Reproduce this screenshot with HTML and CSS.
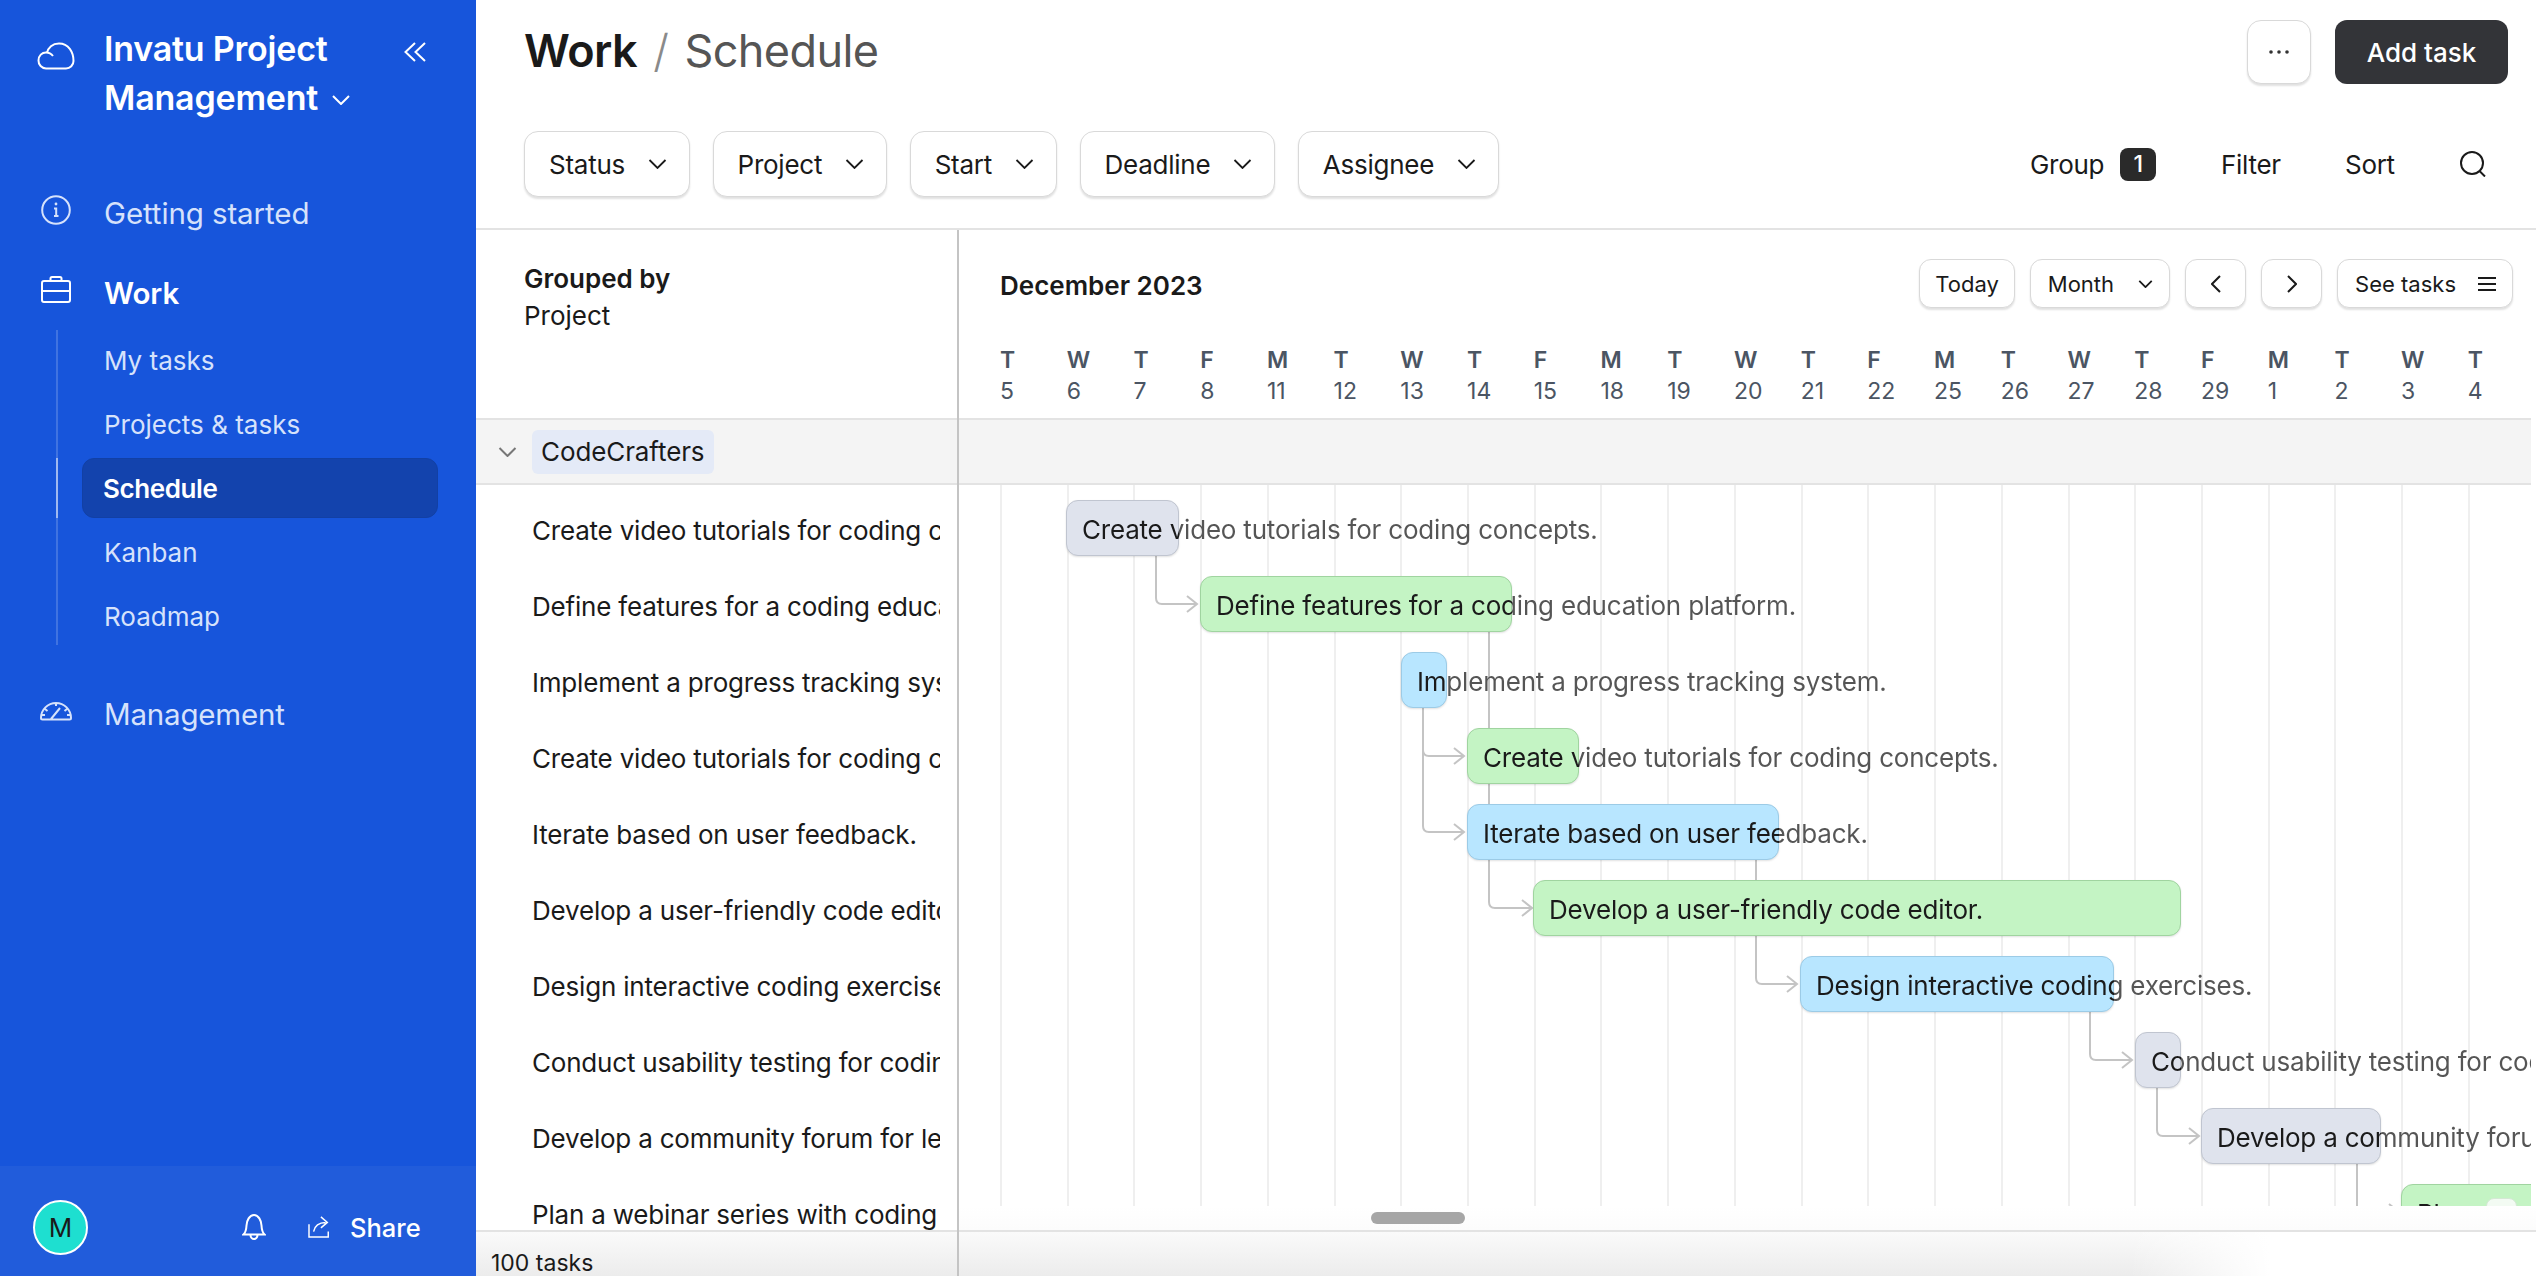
FILE: index.html
```html
<!DOCTYPE html>
<html lang="en">
<head>
<meta charset="utf-8">
<title>Work / Schedule</title>
<link rel="stylesheet" href="styles.css">
</head>
<body>
<div class="app">
  <aside class="sidebar">
    <div class="brand">
      <svg class="brand-cloud" viewBox="0 0 38 28"><path d="M9 26.500h20a7.500 7.500 0 0 0 7.500-7.500c0-9-5-17.500-14.500-17.500-6.500 0-11 4-12 9.500M9 26.500a7.800 7.800 0 0 1-7.500-8c0-5 3.500-8 7.500-8 3 0 5.500 1.500 7 3.500"/></svg>
      <div class="brand-name">Invatu Project<br>Management<svg class="brand-caret" viewBox="0 0 18 10"><path d="M1 1l8 8 8-8"/></svg></div>
      <svg class="brand-collapse" viewBox="0 0 22 20"><path d="M11 1L1.500 10 11 19M21 1L11.500 10 21 19"/></svg>
    </div>
    <nav class="nav">
      <a class="nav-item"><svg class="nav-icon" viewBox="0 0 30 30"><circle cx="15" cy="15" r="13.800"/><path d="M13 13.500h2.200V21M13 21h4.500"/><circle class="dot" cx="15" cy="9" r="1.400"/></svg>Getting started</a>
      <a class="nav-item is-open"><svg class="nav-icon" viewBox="0 0 30 30"><rect x="1" y="5" width="28" height="21" rx="2"/><path d="M1 15h28M9.500 5V2.500q0-1.500 1.500-1.500h8q1.500 0 1.500 1.500V5"/></svg>Work</a>
      <ul class="subnav">
        <li class="sub-item">My tasks</li>
        <li class="sub-item">Projects &amp; tasks</li>
        <li class="sub-item is-active">Schedule</li>
        <li class="sub-item">Kanban</li>
        <li class="sub-item">Roadmap</li>
      </ul>
      <a class="nav-item nav-mgmt"><svg class="nav-icon" viewBox="0 0 32 22"><path d="M2.500 20.500h27q1.500 0 1.500-1.500a15 15 0 0 0-30 0q0 1.500 1.500 1.500zM11 20l9-11M16 4v3M5 10l2.500 2M27 10l-2.500 2M2 16h3M27 16h3"/></svg>Management</a>
    </nav>
    <div class="side-foot">
      <span class="avatar">M</span>
      <svg class="bell" viewBox="0 0 24 28"><path d="M1.500 21.500h21c-2.500-2.500-2.800-5-3-9-.2-5-3-10.500-7.500-10.500S4.700 7.500 4.500 12.500c-.2 4-.5 6.500-3 9zM8.500 22a3.500 4 0 0 0 7 0"/></svg>
      <span class="share"><svg class="share-icon" viewBox="0 0 26 24"><path d="M1 9v14h21V17M6 17c1-6 6-10 13-10M14 1l7 6-7 6"/></svg>Share</span>
    </div>
  </aside>

  <main class="main">
    <header class="topbar">
      <h1 class="crumbs"><b>Work</b><i>/</i><span>Schedule</span></h1>
      <div class="top-actions">
        <button class="btn btn-more"><svg viewBox="0 0 20 4" class="dots"><circle cx="2" cy="2" r="1.800"/><circle cx="10" cy="2" r="1.800"/><circle cx="18" cy="2" r="1.800"/></svg></button>
        <button class="btn-primary">Add task</button>
      </div>
    </header>
    <div class="filters">
      <div class="filter-list">
        <button class="btn btn-filter">Status<svg class="caret" viewBox="0 0 18 10"><path d="M1 1l8 8 8-8"/></svg></button>
        <button class="btn btn-filter">Project<svg class="caret" viewBox="0 0 18 10"><path d="M1 1l8 8 8-8"/></svg></button>
        <button class="btn btn-filter">Start<svg class="caret" viewBox="0 0 18 10"><path d="M1 1l8 8 8-8"/></svg></button>
        <button class="btn btn-filter">Deadline<svg class="caret" viewBox="0 0 18 10"><path d="M1 1l8 8 8-8"/></svg></button>
        <button class="btn btn-filter">Assignee<svg class="caret" viewBox="0 0 18 10"><path d="M1 1l8 8 8-8"/></svg></button>
      </div>
      <div class="view-tools">
        <span class="tool tool-group">Group<em class="badge">1</em></span>
        <span class="tool tool-filter">Filter</span>
        <span class="tool tool-sort">Sort</span>
        <svg class="search" viewBox="0 0 28 26"><circle cx="13" cy="12" r="11"/><path d="M20.500 20l5.500 5.500"/></svg>
      </div>
    </div>

    <section class="board">
      <div class="pane-left">
        <div class="grouped"><strong>Grouped by</strong><span>Project</span></div>
        <div class="group-row">
          <svg class="group-caret" viewBox="0 0 18 10"><path d="M1 1l8 8 8-8"/></svg>
          <span class="chip">CodeCrafters</span>
        </div>
        <ul class="task-list">
          <li>Create video tutorials for coding concepts.</li>
          <li>Define features for a coding education platform.</li>
          <li>Implement a progress tracking system.</li>
          <li>Create video tutorials for coding concepts.</li>
          <li>Iterate based on user feedback.</li>
          <li>Develop a user-friendly code editor.</li>
          <li>Design interactive coding exercises.</li>
          <li>Conduct usability testing for coding platform.</li>
          <li>Develop a community forum for learners.</li>
          <li>Plan a webinar series with coding experts.</li>
        </ul>
        <div class="foot foot-left">100 tasks</div>
      </div>

      <div class="pane-right">
        <div class="cal-head">
          <div class="cal-top">
            <h2 class="month">December 2023</h2>
            <div class="cal-actions">
              <button class="btn btn-sm btn-today">Today</button>
              <button class="btn btn-sm btn-month">Month<svg class="caret-sm" viewBox="0 0 16 9"><path d="M1 1l7 7 7-7"/></svg></button>
              <button class="btn btn-sm btn-arrow"><svg class="arrow" viewBox="0 0 10 18"><path d="M9 1L1 9l8 8"/></svg></button>
              <button class="btn btn-sm btn-arrow"><svg class="arrow" viewBox="0 0 10 18"><path d="M1 1l8 8-8 8"/></svg></button>
              <button class="btn btn-sm btn-see">See tasks<svg class="lines" viewBox="0 0 18 14"><path d="M0 1h18M0 7h18M0 13h18"/></svg></button>
            </div>
          </div>
          <div class="days">
            <div class="day"><b>T</b><span>5</span></div>
            <div class="day"><b>W</b><span>6</span></div>
            <div class="day"><b>T</b><span>7</span></div>
            <div class="day"><b>F</b><span>8</span></div>
            <div class="day"><b>M</b><span>11</span></div>
            <div class="day"><b>T</b><span>12</span></div>
            <div class="day"><b>W</b><span>13</span></div>
            <div class="day"><b>T</b><span>14</span></div>
            <div class="day"><b>F</b><span>15</span></div>
            <div class="day"><b>M</b><span>18</span></div>
            <div class="day"><b>T</b><span>19</span></div>
            <div class="day"><b>W</b><span>20</span></div>
            <div class="day"><b>T</b><span>21</span></div>
            <div class="day"><b>F</b><span>22</span></div>
            <div class="day"><b>M</b><span>25</span></div>
            <div class="day"><b>T</b><span>26</span></div>
            <div class="day"><b>W</b><span>27</span></div>
            <div class="day"><b>T</b><span>28</span></div>
            <div class="day"><b>F</b><span>29</span></div>
            <div class="day"><b>M</b><span>1</span></div>
            <div class="day"><b>T</b><span>2</span></div>
            <div class="day"><b>W</b><span>3</span></div>
            <div class="day"><b>T</b><span>4</span></div>
          </div>
        </div>
        <div class="group-band"></div>
        <div class="chart">
          <div class="grid-lines">
            <i></i><i></i><i></i><i></i><i></i><i></i><i></i><i></i><i></i><i></i><i></i><i></i><i></i><i></i><i></i><i></i><i></i><i></i><i></i><i></i><i></i><i></i><i></i>
          </div>
          <svg class="links" viewBox="0 0 1572 721">
            <path d="M197 71V113q0 6 6 6H237M228 111l10 8-10 8"/>
            <path d="M530 147V417q0 6 6 6H572M563 415l10 8-10 8"/>
            <path d="M464 223V341q0 6 6 6H504M495 339l10 8-10 8M464 265q0 6 6 6H504M495 263l10 8-10 8"/>
            <path d="M797 375V493q0 6 6 6H837M828 491l10 8-10 8"/>
            <path d="M1131 527V569q0 6 6 6H1172M1163 567l10 8-10 8"/>
            <path d="M1198 603V645q0 6 6 6H1239M1230 643l10 8-10 8"/>
            <path d="M1398 679V721q0 6 6 6H1439M1430 719l10 8-10 8"/>
          </svg>
          <div class="bars">
            <div class="bar-row"><div class="bar bar-grey" style="--x:107px;--w:113px"><span class="label">Create video tutorials for coding concepts.</span></div></div>
            <div class="bar-row"><div class="bar bar-green" style="--x:241px;--w:312px"><span class="label">Define features for a coding education platform.</span></div></div>
            <div class="bar-row"><div class="bar bar-blue" style="--x:442px;--w:46px"><span class="label">Implement a progress tracking system.</span></div></div>
            <div class="bar-row"><div class="bar bar-green" style="--x:508px;--w:112px"><span class="label">Create video tutorials for coding concepts.</span></div></div>
            <div class="bar-row"><div class="bar bar-blue" style="--x:508px;--w:312px"><span class="label">Iterate based on user feedback.</span></div></div>
            <div class="bar-row"><div class="bar bar-green" style="--x:574px;--w:648px"><span class="label">Develop a user-friendly code editor.</span></div></div>
            <div class="bar-row"><div class="bar bar-blue" style="--x:841px;--w:314px"><span class="label">Design interactive coding exercises.</span></div></div>
            <div class="bar-row"><div class="bar bar-grey" style="--x:1176px;--w:46px"><span class="label">Conduct usability testing for coding platform.</span></div></div>
            <div class="bar-row"><div class="bar bar-grey" style="--x:1242px;--w:180px"><span class="label">Develop a community forum for learners.</span></div></div>
            <div class="bar-row"><div class="bar bar-green" style="--x:1442px;--w:220px"><span class="label">Plan a webinar series with coding experts.</span><span class="bar-tag">+</span></div></div>
          </div>
        </div>
        <div class="scroll-track"><span class="scroll-thumb"></span></div>
        <div class="foot foot-right"></div>
      </div>
    </section>
  </main>
</div>
</body>
</html>
```

FILE: styles.css
```css
* { box-sizing: border-box; }
html, body { margin: 0; height: 100%; }
body {
  font-family: Inter, "Noto Sans", sans-serif;
  color: #1a1a1a;
  background: #fff;
  overflow: hidden;
}
svg { display: block; flex: none; fill: none; stroke: currentColor; stroke-width: 2; }
button { font: inherit; color: inherit; }
ul { list-style: none; margin: 0; padding: 0; }
h1, h2 { margin: 0; font-weight: inherit; font-size: inherit; }

.app { display: flex; width: 2536px; height: 1276px; }

/* sidebar */
.sidebar {
  width: 476px;
  flex: none;
  display: flex;
  flex-direction: column;
  background: #1755db;
  color: #fff;
}
.brand { display: flex; position: relative; padding: 24px 0 0 104px; height: 185px; }
.brand-name { font-size: 34px; font-weight: 600; line-height: 49px; letter-spacing: -0.2px; }
.brand-cloud { position: absolute; left: 37px; top: 42px; width: 38px; height: 28px; }
.brand-collapse { position: absolute; left: 404px; top: 42px; width: 22px; height: 20px; }
.brand-caret { display: inline-block; width: 18px; height: 10px; margin-left: 14px; vertical-align: 5px; }
.nav { flex: 1; }
.nav-item {
  display: flex;
  align-items: center;
  height: 56px;
  position: relative;
  padding-left: 104px;
  font-size: 29.5px;
  letter-spacing: -0.1px;
  color: #d6e2fb;
}
.nav-item.is-open { margin-top: 24px; color: #fff; font-weight: 600; }
.nav-icon { position: absolute; left: 41px; top: 10px; width: 30px; height: 30px; }
.nav-item.is-open .nav-icon { top: 11px; }
.nav-icon .dot { fill: currentColor; stroke: none; }
.nav-mgmt { margin-top: 41px; letter-spacing: -0.2px; }
.nav-mgmt .nav-icon { left: 40px; top: 13px; width: 32px; height: 22px; }
.subnav {
  margin: 9px 0 0 56px;
  border-left: 2px solid rgba(255, 255, 255, .18);
  height: 315px;
}
.sub-item {
  display: flex;
  align-items: center;
  height: 60px;
  margin: 0 0 4px 24px;
  width: 356px;
  padding-left: 22px;
  font-size: 26px;
  color: #d6e2fb;
}
.sub-item.is-active {
  position: relative;
  background: #1343ad;
  border: 1px solid #1240a5;
  border-radius: 12px;
  color: #fff;
  font-weight: 600;
  letter-spacing: -0.4px;
  padding-left: 20px;
}
.sub-item.is-active::before {
  content: "";
  position: absolute;
  left: -27px;
  top: -1px;
  bottom: -1px;
  width: 2px;
  background: rgba(255, 255, 255, .5);
}
.side-foot {
  height: 110px;
  display: flex;
  align-items: center;
  position: relative;
  background: #215cdb;
  padding: 12px 0 0 33px;
}
.avatar {
  width: 55px;
  height: 55px;
  border-radius: 50%;
  border: 2px solid #fff;
  background: #1edfd0;
  color: #1a1a1a;
  display: flex;
  align-items: center;
  justify-content: center;
  font-size: 26px;
}
.bell { width: 24px; height: 28px; margin-left: 154px; }
.share { display: flex; align-items: center; margin-left: 42px; font-size: 25.5px; font-weight: 500; }
.share-icon { width: 24px; height: 22px; margin-right: 18px; stroke-width: 1.600; }

/* main */
.main { flex: 1; min-width: 0; display: flex; flex-direction: column; }
.topbar {
  height: 104px;
  flex: none;
  display: flex;
  align-items: flex-start;
  justify-content: space-between;
  padding: 20px 28px 0 48px;
}
.crumbs { display: flex; align-items: center; font-size: 45px; height: 64px; margin-top: -2px; letter-spacing: -0.5px; }
.crumbs b { font-weight: 600; color: #1a1a1a; }
.crumbs i { font-style: normal; color: #8a8a8a; margin: 0 16px; font-weight: 300; }
.crumbs span { color: #555; font-weight: 400; letter-spacing: -0.6px; }
.top-actions { display: flex; gap: 24px; }
.btn {
  background: #fff;
  border: 1px solid #d9d9d9;
  border-radius: 14px;
  box-shadow: 0 2px 2px rgba(0, 0, 0, .12);
  display: flex;
  align-items: center;
  padding: 0;
}
.btn-more { width: 64px; height: 64px; justify-content: center; }
.dots { width: 20px; height: 4px; fill: #333; stroke: none; }
.btn-primary {
  height: 64px;
  width: 173px;
  border: 0;
  border-radius: 12px;
  background: #333438;
  color: #fff;
  font-size: 26px;
  font-weight: 500;
}
.filters {
  height: 126px;
  flex: none;
  display: flex;
  justify-content: space-between;
  padding: 27px 0 0 48px;
  border-bottom: 2px solid #e3e3e3;
}
.filter-list { display: flex; gap: 22.5px; height: 66px; }
.btn-filter { height: 66px; padding: 0 22px 0 24px; font-size: 26px; letter-spacing: -0.25px; gap: 23px; }
.caret { width: 19px; height: 10px; stroke-width: 1.800; }
.view-tools { position: relative; width: 512px; height: 66px; font-size: 26px; letter-spacing: -0.3px; }
.tool { position: absolute; top: 0; height: 66px; display: flex; align-items: center; }
.tool-group { left: 6px; }
.tool-filter { left: 197px; }
.tool-sort { left: 321px; }
.badge {
  font-style: normal;
  width: 36px;
  height: 33px;
  margin-left: 16px;
  border-radius: 8px;
  background: #2a2a2a;
  color: #fff;
  font-size: 23px;
  font-weight: 500;
  display: flex;
  align-items: center;
  justify-content: center;
}
.search { position: absolute; left: 435px; top: 20px; width: 28px; height: 26px; }

/* board */
.board { flex: 1; min-height: 0; display: flex; }
.pane-left { width: 481px; flex: none; display: flex; flex-direction: column; }
.pane-right {
  flex: 1;
  min-width: 0;
  border-left: 2px solid #c4c4c4;
  display: flex;
  flex-direction: column;
}
.grouped {
  height: 188px;
  flex: none;
  padding: 30px 0 0 48px;
  display: flex;
  flex-direction: column;
  font-size: 26px;
  line-height: 37px;
}
.grouped strong { font-weight: 600; }
.group-row {
  height: 67px;
  flex: none;
  display: flex;
  align-items: center;
  background: #f4f4f4;
  border-top: 2px solid #e3e3e3;
  border-bottom: 2px solid #e3e3e3;
  padding-left: 22px;
}
.group-caret { width: 19px; height: 10px; color: #777; }
.chip {
  margin-left: 15px;
  height: 44px;
  display: flex;
  align-items: center;
  padding: 0 9px;
  background: #e4eaf7;
  border-radius: 6px;
  font-size: 26px;
  letter-spacing: -0.1px;
}
.task-list { flex: 1; min-height: 0; overflow: hidden; padding-top: 5px; margin-right: 17px; margin-left: 56px; }
.task-list li {
  height: 76px;
  display: flex;
  align-items: center;
  padding-top: 4px;
  white-space: nowrap;
  font-size: 26px;
  letter-spacing: -0.2px;
  overflow: hidden;
}
.foot { height: 46px; flex: none; border-top: 2px solid #e3e3e3; }
.foot-left {
  background: linear-gradient(180deg, #fafafa, #ececec);
  padding: 13px 0 0 15px;
  font-size: 23px;
  line-height: 36px;
  white-space: nowrap;
}
.foot-right {
  background:
    linear-gradient(90deg, rgba(255, 255, 255, 0) 1170px, #fff 1310px),
    linear-gradient(180deg, #fafafa, #ececec);
}

/* calendar head */
.cal-head { height: 188px; flex: none; padding: 29px 23px 0 41px; }
.cal-top { display: flex; justify-content: space-between; height: 49px; align-items: center; }
.month { font-size: 26px; font-weight: 600; margin-top: 3px; }
.cal-actions { display: flex; gap: 15px; }
.btn-sm { height: 49px; padding: 0 17px; font-size: 22px; border-radius: 12px; }
.btn-today { padding: 0 15px; }
.btn-month { gap: 24px; padding-right: 16px; }
.btn-see { gap: 22px; padding-right: 16px; }
.btn-arrow { width: 61px; justify-content: center; padding: 0; }
.caret-sm { width: 15px; height: 8px; }
.arrow { width: 10px; height: 18px; }
.lines { width: 18px; height: 14px; }
.days { display: grid; grid-template-columns: repeat(23, 66.72px); margin-top: 37px; margin-right: -23px; }
.day { display: flex; flex-direction: column; color: #4b5563; font-size: 23px; line-height: 31px; }
.day b { font-weight: 600; }
.group-band {
  height: 67px;
  flex: none;
  background: #f4f4f4;
  border-top: 2px solid #e3e3e3;
  border-bottom: 2px solid #e3e3e3;
  margin-right: 5px;
}

/* chart */
.chart { position: relative; height: 721px; flex: none; overflow: hidden; margin-right: 5px; }
.grid-lines {
  position: absolute;
  inset: 0 auto 0 41px;
  display: grid;
  grid-template-columns: repeat(23, 66.72px);
}
.grid-lines i { border-left: 2px solid #efefef; }
.links {
  position: absolute;
  left: 0;
  top: 0;
  width: 1572px;
  height: 721px;
  overflow: visible;
  color: #c4c4c4;
}
.bars { position: relative; padding-top: 15px; }
.bar-row { height: 76px; }
.bar {
  margin-left: var(--x);
  width: var(--w);
  height: 56px;
  position: relative;
  border: 1px solid;
  border-radius: 12px;
  box-shadow: 0 1px 2px rgba(0, 0, 0, .12);
  padding: 2px 0 0 15px;
  display: flex;
  align-items: center;
  white-space: nowrap;
  font-size: 26px;
  letter-spacing: -0.2px;
}
.label {
  background: linear-gradient(90deg, #1a1a1a calc(var(--w) - 16px), #555 calc(var(--w) - 16px));
  -webkit-background-clip: text;
  background-clip: text;
  -webkit-text-fill-color: transparent;
  color: #333;
}
.bar-grey { background: #dfe3ed; border-color: #c0c5d0; }
.bar-green { background: #c4f4c4; border-color: #a0d4a0; }
.bar-blue { background: #b8e6ff; border-color: #9ccbe6; }
.bar-tag {
  position: absolute;
  left: 84px;
  top: 13px;
  width: 31px;
  height: 30px;
  border: 1px solid #d5e8d5;
  border-radius: 8px;
  background: #f3fbf3;
  color: #2d7a2d;
  font-size: 20px;
  display: flex;
  align-items: center;
  justify-content: center;
}
.scroll-track { height: 24px; flex: none; position: relative; background: linear-gradient(180deg, #fff, #fcfcfc); }
.scroll-thumb {
  position: absolute;
  left: 412px;
  top: 6px;
  width: 94px;
  height: 12px;
  border-radius: 6px;
  background: #a6a6a6;
}
```
